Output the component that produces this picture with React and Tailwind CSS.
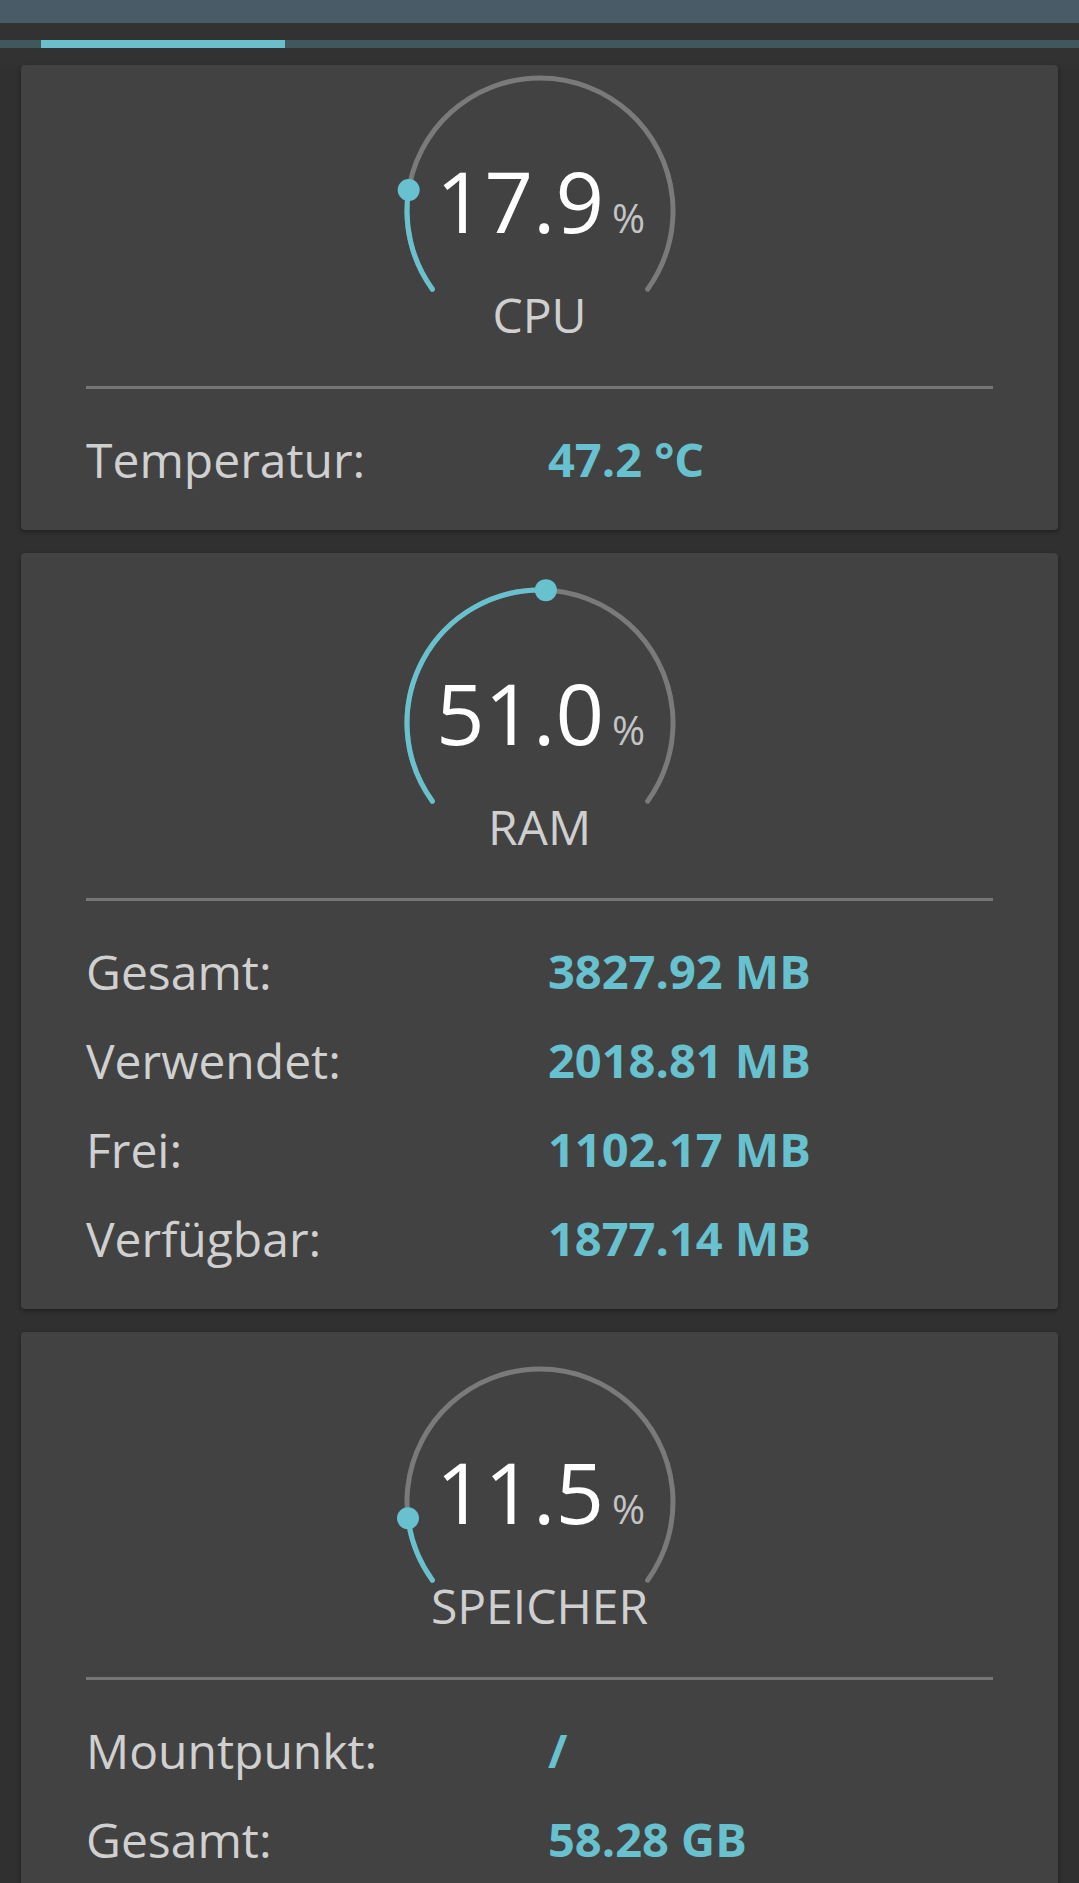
import React from 'react';

const TEAL = '#68c1ce';

const polar = (cx, cy, r, deg) => {
  const a = (deg * Math.PI) / 180;
  return [cx + r * Math.cos(a), cy + r * Math.sin(a)];
};

const arcPath = (cx, cy, r, from, to) => {
  const [x1, y1] = polar(cx, cy, r, from);
  const [x2, y2] = polar(cx, cy, r, to);
  const large = to - from > 180 ? 1 : 0;
  return `M ${x1} ${y1} A ${r} ${r} 0 ${large} 1 ${x2} ${y2}`;
};

const Gauge = ({ value, label }) => {
  const cx = 150;
  const cy = 146;
  const r = 133;
  const start = 144;
  const sweep = 252;
  const end = start + (sweep * value) / 100;
  const [dx, dy] = polar(cx, cy, r, end);

  return (
    <div className="relative mx-auto w-[300px] h-[321px]">
      <svg width="300" height="321" viewBox="0 0 300 321" className="absolute inset-0">
        <path d={arcPath(cx, cy, r, start, start + sweep)} fill="none" stroke="#7a7a7a" strokeWidth="5" strokeLinecap="round" />
        <path d={arcPath(cx, cy, r, start, end)} fill="none" stroke={TEAL} strokeWidth="5" strokeLinecap="round" />
        <circle cx={dx} cy={dy} r="11" fill={TEAL} />
      </svg>
      <div className="absolute left-0 right-0 top-[93px] flex items-baseline justify-center gap-[8px] pl-[2px]">
        <span className="text-[85px] leading-none text-white">{value.toFixed(1)}</span>
        <span className="text-[40px] leading-none text-[#c4c4c4]">%</span>
      </div>
      <div className="absolute left-0 right-0 top-[226px] text-center text-[48px] leading-none text-[#cfcfcf]">
        {label}
      </div>
    </div>
  );
};

const Card = ({ value, label, rows, first }) => (
  <div className={`mx-[21px] rounded-[4px] bg-[#424242] px-[65px] pb-[26px] shadow-[0_2px_4px_rgba(0,0,0,0.35)] ${first ? 'pt-0' : 'mt-[23px] pt-[24px]'}`}>
    <Gauge value={value} label={label} />
    <div className="h-[3px] bg-[#767676]" />
    <div className="pt-[26px]">
      {rows.map(([k, v]) => (
        <div key={k} className="grid grid-cols-[462px_1fr] leading-[89px]">
          <span className="text-[48px] text-[#d0d0d0]">{k}</span>
          <span className="text-[47px] font-bold" style={{ color: TEAL }}>{v}</span>
        </div>
      ))}
    </div>
  </div>
);

export default function App() {
  return (
    <div className="h-[1883px] overflow-hidden bg-[#303030]" style={{ fontFamily: '"Open Sans", "Noto Sans", sans-serif' }}>
      {/* App bar bottom edge + tabs */}
      <div className="h-[23px] bg-[#485b66]" />
      <div className="h-[42px] bg-[#323232] pt-[17px]">
        <div className="h-[8px] bg-[#3f585c] pl-[41px]">
          <div className="h-full w-[244px] bg-[#6bbfcb]" />
        </div>
      </div>

      <Card first value={17.9} label="CPU" rows={[['Temperatur:', '47.2 °C']]} />
      <Card
        value={51.0}
        label="RAM"
        rows={[
          ['Gesamt:', '3827.92 MB'],
          ['Verwendet:', '2018.81 MB'],
          ['Frei:', '1102.17 MB'],
          ['Verfügbar:', '1877.14 MB'],
        ]}
      />
      <Card
        value={11.5}
        label="SPEICHER"
        rows={[
          ['Mountpunkt:', '/'],
          ['Gesamt:', '58.28 GB'],
        ]}
      />
    </div>
  );
}
